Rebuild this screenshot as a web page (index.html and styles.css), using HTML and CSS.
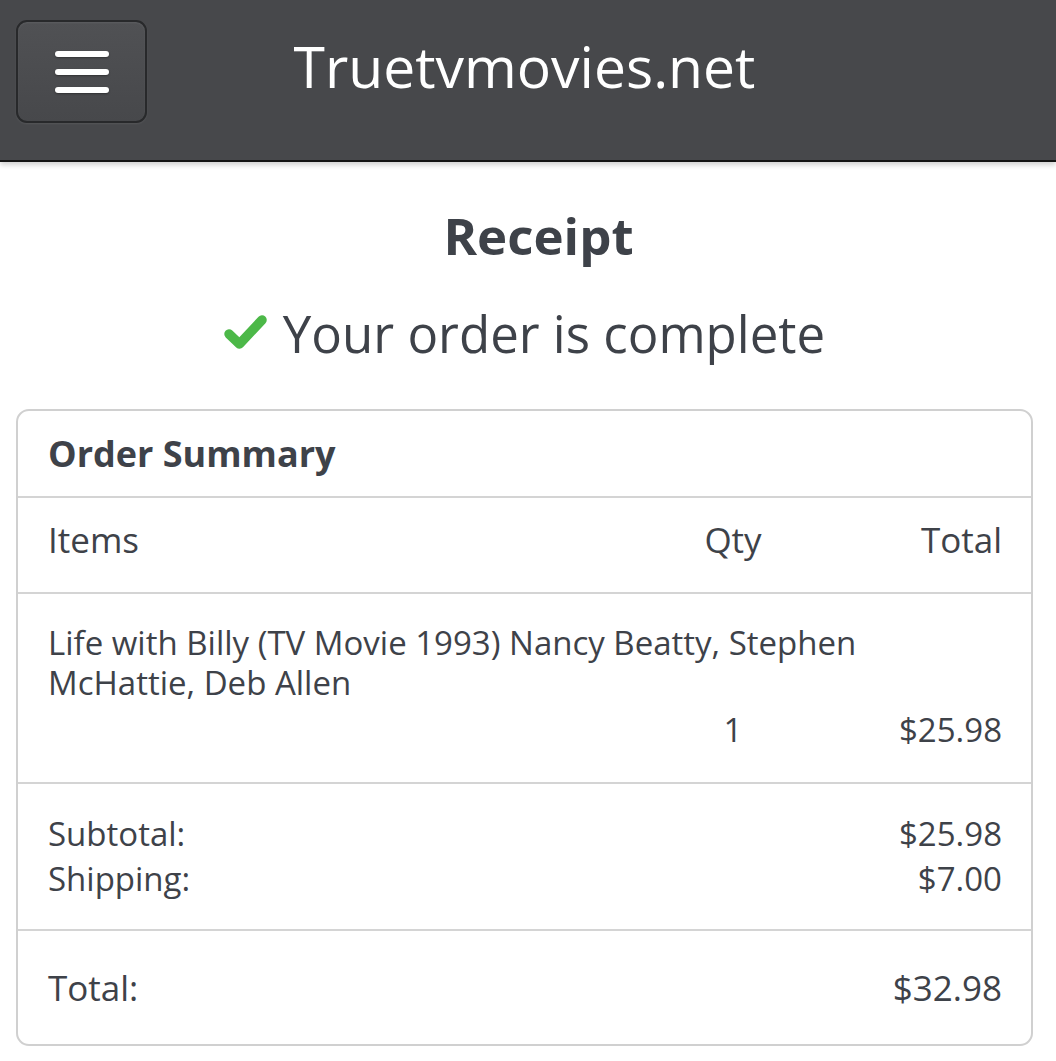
FILE: index.html
```html
<!DOCTYPE html>
<html lang="en">
<head>
<meta charset="utf-8">
<title>Receipt - Truetvmovies.net</title>
<link rel="stylesheet" href="styles.css">
</head>
<body>
<header class="topbar">
  <div class="topbar-left">
    <button class="menu-btn" aria-label="Menu">
      <span class="bar"></span><span class="bar"></span><span class="bar"></span>
    </button>
  </div>
  <div class="site-title">Truetvmovies.net</div>
  <div class="topbar-right"></div>
</header>

<main class="page">
  <h1 class="receipt-title">Receipt</h1>
  <h2 class="status">
    <svg class="check" viewBox="0 0 43 36" width="43" height="36" aria-hidden="true">
      <path d="M5 20 L15.5 30 L38 6" fill="none" stroke="#4cb848" stroke-width="9.5" stroke-linecap="round" stroke-linejoin="round"/>
    </svg>
    <span>Your order is complete</span>
  </h2>

  <section class="card">
    <div class="card-head">Order Summary</div>
    <div class="row cols">
      <div class="c-item">Items</div>
      <div class="c-qty">Qty</div>
      <div class="c-total">Total</div>
    </div>
    <div class="row item">
      <div class="item-name">Life with Billy (TV Movie 1993) Nancy Beatty, Stephen McHattie, Deb Allen</div>
      <div class="c-item"></div>
      <div class="c-qty">1</div>
      <div class="c-total">$25.98</div>
    </div>
    <div class="row sums">
      <div class="sum-line"><span>Subtotal:</span><span>$25.98</span></div>
      <div class="sum-line"><span>Shipping:</span><span>$7.00</span></div>
    </div>
    <div class="row grand">
      <div class="sum-line"><span>Total:</span><span>$32.98</span></div>
    </div>
  </section>
</main>
</body>
</html>
```

FILE: styles.css
```css
* { box-sizing: border-box; }

html, body {
  margin: 0;
  padding: 0;
  background: #ffffff;
}

body {
  font-family: "Open Sans", "Noto Sans", sans-serif;
  color: #3e4249;
}

.topbar {
  height: 162px;
  background: #47484b;
  border-bottom: 2px solid #141414;
  box-shadow: 0 3px 5px rgba(0, 0, 0, 0.18);
  display: grid;
  grid-template-columns: 1fr auto 1fr;
  align-items: center;
  padding-right: 7px;
}

.topbar-left {
  padding-left: 16px;
  display: flex;
  align-items: center;
}

.menu-btn {
  width: 131px;
  height: 103px;
  margin-top: -17px;
  border: 2px solid #28292b;
  border-radius: 11px;
  background: linear-gradient(#505154, #47484b);
  box-shadow: inset 0 1px 2px rgba(255, 255, 255, 0.08), 0 1px 2px rgba(255, 255, 255, 0.08);
  display: flex;
  flex-direction: column;
  align-items: center;
  justify-content: center;
  gap: 12px;
  padding: 0;
  cursor: pointer;
}

.menu-btn .bar {
  display: block;
  width: 54px;
  height: 6px;
  border-radius: 3px;
  background: #ffffff;
  box-shadow: 0 1px 2px rgba(0, 0, 0, 0.35);
}

.site-title {
  color: #ffffff;
  font-size: 57px;
  font-weight: 400;
  line-height: 1;
  margin-top: -27px;
  white-space: nowrap;
}

.page {
  padding: 0 23px 0 16px;
}

.receipt-title {
  margin: 38px 0 0 0;
  padding-left: 28px;
  text-align: center;
  font-size: 51px;
  font-weight: 700;
  line-height: 70px;
  color: #3e4249;
}

.status {
  margin: 28px 0 0 0;
  display: flex;
  justify-content: center;
  align-items: center;
  gap: 16px;
  font-size: 51px;
  font-weight: 400;
  line-height: 70px;
  color: #3e4249;
}

.check {
  display: block;
  margin-top: -2px;
}

.card {
  margin-top: 41px;
  border: 2px solid #d0d0d0;
  border-radius: 13px;
  overflow: hidden;
}

.card-head {
  padding: 20px 29px 19px 30px;
  font-size: 36px;
  font-weight: 700;
  line-height: 46px;
}

.row {
  border-top: 2px solid #d4d4d4;
  padding: 0 29px 0 30px;
}

.cols,
.item {
  display: grid;
  grid-template-columns: 1fr 138px 200px;
}

.cols {
  font-size: 35px;
  line-height: 50px;
  padding-top: 17px;
  padding-bottom: 27px;
}

.c-qty { text-align: center; }
.c-total { text-align: right; }

.item {
  font-size: 33px;
  line-height: 40px;
  padding-top: 29px;
  padding-bottom: 32px;
}

.item-name {
  grid-column: 1 / -1;
  margin-bottom: 7px;
}

.sums {
  font-size: 33px;
  line-height: 45px;
  padding-top: 27px;
  padding-bottom: 28px;
}

.sum-line {
  display: flex;
  justify-content: space-between;
}

.grand {
  font-size: 35px;
  line-height: 50px;
  padding-top: 32px;
  padding-bottom: 31px;
}
```
